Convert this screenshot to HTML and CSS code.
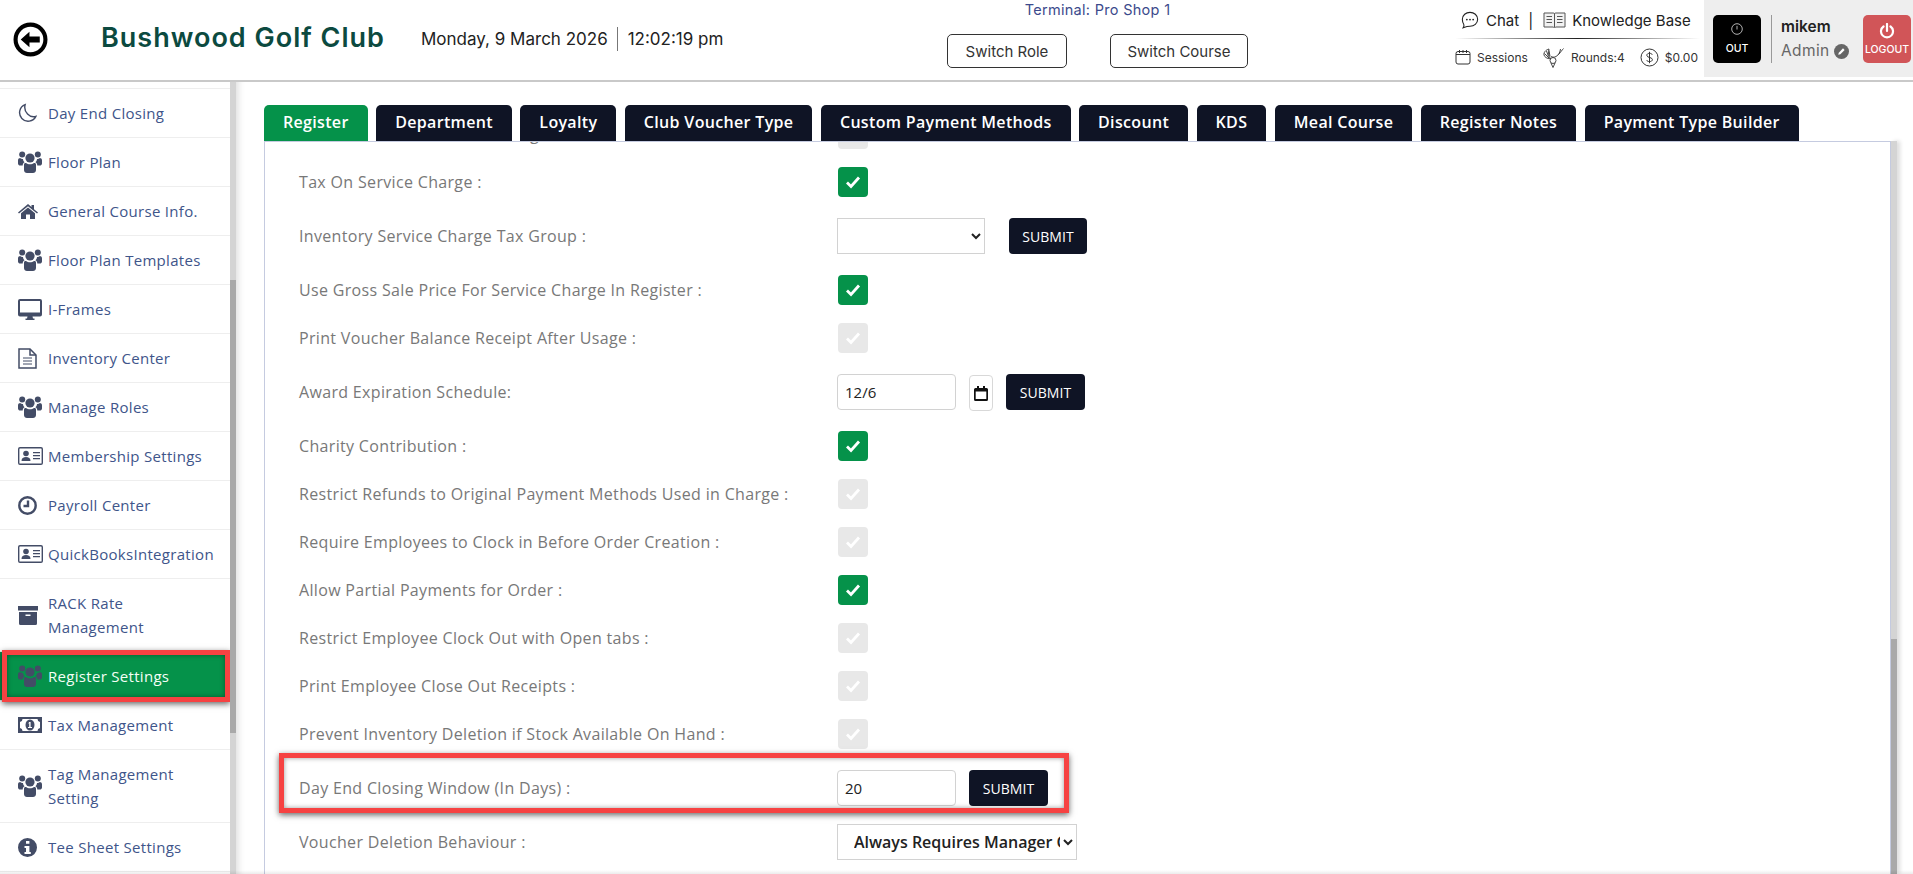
FILE: index.html
```html
<!DOCTYPE html>
<html lang="en">
<head>
<meta charset="utf-8">
<title>Register Settings</title>
<link rel="stylesheet" href="styles.css">
</head>
<body>
<svg class="sprite" width="0" height="0" aria-hidden="true">
  <symbol id="i-users" viewBox="0 0 24 22">
    <circle cx="12" cy="7" r="4.6"/><circle cx="4.2" cy="3.6" r="3"/><circle cx="19.8" cy="3.6" r="3"/>
    <path d="M6 13.5c0-1.2 1-1.6 2-1.6 1 .9 2.5 1.4 4 1.4s3-.5 4-1.4c1 0 2 .4 2 1.6V19c0 2-1.4 3-3 3H9c-1.600 0-3-1-3-3z"/>
    <path d="M0 9.500C0 7.700 1.200 7 2.200 7c.8.700 1.500 1 2.800 1 0 .9.500 2.400 1.600 3.300C5.400 11.800 4.700 13 4.700 14.600H2.400C1 14.600 0 13.800 0 12.500z"/>
    <path d="M24 9.500C24 7.700 22.800 7 21.800 7c-.8.700-1.500 1-2.800 1 0 .9-.5 2.400-1.600 3.300 1.200.5 1.900 1.700 1.900 3.300h2.300c1.400 0 2.400-.8 2.400-2.100z"/>
  </symbol>
  <symbol id="i-moon" viewBox="0 0 20 20">
    <path class="line" d="M7.500 1.200A9 9 0 1 0 18.800 13.500C12.500 15.500 5.500 9 7.500 1.200z"/>
  </symbol>
  <symbol id="i-home" viewBox="0 0 20 15">
    <path d="M10 0l3.500 3V1h2.500v4.200L20 8.500l-1 1.100L10 2.200 1 9.600 0 8.500z"/>
    <path d="M10 3.600l7 5.700V15h-5v-4.500H8V15H3V9.300z"/>
  </symbol>
  <symbol id="i-desktop" viewBox="0 0 24 21">
    <path d="M2 0h20a2 2 0 0 1 2 2v13.500a2 2 0 0 1-2 2h-7.500l.5 2h1.500V21h-9v-1.500H9l.5-2H2a2 2 0 0 1-2-2V2a2 2 0 0 1 2-2zm0 2v11.500h20V2z"/>
  </symbol>
  <symbol id="i-file" viewBox="0 0 19 21">
    <path class="line" d="M1 1h11l6 6v13H1z"/><path class="line" d="M12 1v6h6"/>
    <path class="line thin" d="M5 10h9M5 13h9M5 16h9"/>
  </symbol>
  <symbol id="i-card" viewBox="0 0 25 18">
    <path d="M2 0h21a2 2 0 0 1 2 2v14a2 2 0 0 1-2 2H2a2 2 0 0 1-2-2V2a2 2 0 0 1 2-2zm0 1.500a.6.6 0 0 0-.6.600V16c0 .4.200.6.600.6h21c.4 0 .6-.2.600-.6V2.100a.6.600 0 0 0-.6-.6z"/>
    <circle cx="8" cy="6.500" r="2.800"/><path d="M3.500 14c0-3 1.800-4 4.500-4s4.500 1 4.500 4z"/>
    <path d="M15 5h7v1.300h-7zM15 8h7v1.300h-7zM15 11h7v1.300h-7z"/>
  </symbol>
  <symbol id="i-clock" viewBox="0 0 19 19">
    <circle class="line thick" cx="9.500" cy="9.500" r="8.200"/><path class="line thick" d="M10 4.500v5.500H5.500"/>
  </symbol>
  <symbol id="i-archive" viewBox="0 0 20 19">
    <path d="M0 0h20v4.500H0zM1 6h18v11.500a1.500 1.500 0 0 1-1.500 1.500h-15A1.500 1.500 0 0 1 1 17.500zm6.500 2.500v1.500h5V8.500z"/>
  </symbol>
  <symbol id="i-money" viewBox="0 0 24 16">
    <path fill-rule="evenodd" d="M0 0h24v16H0zM4.500 2A3 3 0 0 1 2 5v6a3 3 0 0 1 2.500 3h15A3 3 0 0 1 22 11V5a3 3 0 0 1-2.500-3z"/>
    <ellipse cx="12" cy="8" rx="4.500" ry="5.500"/><path class="knock" d="M11 5h1.600v5H14v1h-4v-1h1.200V6.300L10.300 7z"/>
  </symbol>
  <symbol id="i-info" viewBox="0 0 19 19">
    <path fill-rule="evenodd" d="M9.500 0a9.500 9.500 0 1 1 0 19 9.500 9.500 0 0 1 0-19zM8 3v2.800h3.400V3zM6.500 8v2H8v4H6.500v2h6.300v-2h-1.400V8z"/>
  </symbol>
  <symbol id="i-check" viewBox="0 0 20 20">
    <path class="tick" d="M4 10.500l4 4 8-9"/>
  </symbol>
</svg>

<div class="app">
  <header class="topbar">
    <a class="back" href="#" aria-label="Back">
      <svg class="back-icon" viewBox="0 0 34 34"><circle cx="17" cy="17" r="14.500"/><path d="M7.500 17l8.500-7.500v4.500h10v6H16v4.500z"/></svg>
    </a>
    <h1 class="club">Bushwood Golf Club</h1>
    <div class="clock-text"><span class="date">Monday, 9 March 2026</span><span class="time">12:02:19 pm</span></div>
    <div class="terminal">
      <div class="terminal-name">Terminal: Pro Shop 1</div>
      <div class="terminal-actions">
        <button class="outline-btn role-btn">Switch Role</button>
        <button class="outline-btn course-btn">Switch Course</button>
      </div>
    </div>
    <div class="links">
      <div class="links-top">
        <svg class="ic-chat" viewBox="0 0 20 20"><path d="M10 1.500c4.500 0 8.500 3 8.500 7.800s-4 7.700-8.500 7.700c-1.500 0-4.500.5-7.500 1.500 1-1.500 1-2.500.6-3.500C2 13.500 1.500 11.500 1.500 9.300c0-4.800 4-7.800 8.500-7.800z"/><circle class="dot" cx="6.500" cy="9.500" r="1"/><circle class="dot" cx="10" cy="9.500" r="1"/><circle class="dot" cx="13.500" cy="9.500" r="1"/></svg>
        <span>Chat</span><span class="bar">|</span>
        <svg class="ic-book" viewBox="0 0 23 19"><path d="M1 2h9.500c.5 0 1 .4 1 1 0-.6.500-1 1-1H22v14h-9.500l-1 1-1-1H1zM11.500 3v13M3.500 5.500h5.500M3.500 8.500h5.500M3.500 11.500h5.500M14 5.500h5.500M14 8.500h5.500M14 11.500h5.500"/></svg>
        <span>Knowledge Base</span>
      </div>
      <div class="links-rule"></div>
      <div class="links-bottom">
        <svg class="ic-cal" viewBox="0 0 16 16"><rect x="1" y="2.500" width="14" height="12.500" rx="2"/><path d="M1 5.500h14M4.500 1v3M8 1v3M11.500 1v3"/></svg>
        <span class="stat stat-sessions">Sessions</span>
        <svg class="ic-golf" viewBox="0 0 21 21"><path d="M20.500 1.500c-1.500 1.500-3 4-5 6"/><path d="M17.500 2c-.3 2.500-1.500 6-4.500 7.500-2 1-3.500 .7-5 0"/><path d="M6 2C2.500 3 .5 5.500 1 8c.5 2 3 3.800 6.500 3.800C5.500 9 5 5.500 6 2zM3.500 4L5.500 9.500M1.500 6.500L6 11M6 3.500L7 9.500"/><circle cx="10" cy="13.500" r="3"/><path d="M8 16l2 4.500 2-4.500"/></svg>
        <span class="stat stat-rounds">Rounds:4</span>
        <svg class="ic-coin" viewBox="0 0 19 19"><circle cx="9.500" cy="9.500" r="8.500"/><path d="M12.300 6.800c-.4-1-1.500-1.500-2.800-1.500-1.500 0-2.700.8-2.700 2 0 2.800 5.600 1.600 5.600 4.300 0 1.200-1.200 2-2.900 2-1.400 0-2.500-.6-2.900-1.600M9.500 3.800v11.400"/></svg>
        <span class="stat">$0.00</span>
      </div>
    </div>
    <div class="user">
      <button class="tile tile-out">
        <svg class="tile-clock" viewBox="0 0 12 12"><circle cx="6" cy="6" r="5.300"/><path d="M6 2.800V6.500"/></svg>
        <span>OUT</span>
      </button>
      <div class="user-info">
        <div class="user-name">mikem</div>
        <div class="user-role">Admin <svg class="edit" viewBox="0 0 16 16"><circle cx="8" cy="8" r="8"/><path d="M4.500 11.500l.6-2.300 4.500-4.600 1.700 1.700-4.500 4.600z"/></svg></div>
      </div>
      <button class="tile tile-logout">
        <svg class="tile-power" viewBox="0 0 16 16"><path d="M4.500 3.500a6 6 0 1 0 7 0M8 1v7"/></svg>
        <span>LOGOUT</span>
      </button>
    </div>
  </header>

  <div class="body">
    <aside class="side">
      <nav class="menu">
        <a class="item"><span class="item-ic"><svg class="ic w19 h20"><use href="#i-moon"/></svg></span><span>Day End Closing</span></a>
        <a class="item"><span class="item-ic"><svg class="ic w24 h22"><use href="#i-users"/></svg></span><span>Floor Plan</span></a>
        <a class="item"><span class="item-ic"><svg class="ic w20 h15"><use href="#i-home"/></svg></span><span>General Course Info.</span></a>
        <a class="item"><span class="item-ic"><svg class="ic w24 h22"><use href="#i-users"/></svg></span><span>Floor Plan Templates</span></a>
        <a class="item"><span class="item-ic"><svg class="ic w24 h21"><use href="#i-desktop"/></svg></span><span>I-Frames</span></a>
        <a class="item"><span class="item-ic"><svg class="ic w19 h21"><use href="#i-file"/></svg></span><span>Inventory Center</span></a>
        <a class="item"><span class="item-ic"><svg class="ic w24 h22"><use href="#i-users"/></svg></span><span>Manage Roles</span></a>
        <a class="item"><span class="item-ic"><svg class="ic w25 h18"><use href="#i-card"/></svg></span><span>Membership Settings</span></a>
        <a class="item"><span class="item-ic"><svg class="ic w19 h19"><use href="#i-clock"/></svg></span><span>Payroll Center</span></a>
        <a class="item"><span class="item-ic"><svg class="ic w25 h18"><use href="#i-card"/></svg></span><span>QuickBooksIntegration</span></a>
        <a class="item"><span class="item-ic"><svg class="ic w20 h19"><use href="#i-archive"/></svg></span><span>RACK Rate<br>Management</span></a>
        <a class="item active"><span class="item-ic"><svg class="ic w24 h22"><use href="#i-users"/></svg></span><span>Register Settings</span><span class="mark mark-side"></span></a>
        <a class="item"><span class="item-ic"><svg class="ic w24 h16"><use href="#i-money"/></svg></span><span>Tax Management</span></a>
        <a class="item"><span class="item-ic"><svg class="ic w24 h22"><use href="#i-users"/></svg></span><span>Tag Management<br>Setting</span></a>
        <a class="item"><span class="item-ic"><svg class="ic w19 h19"><use href="#i-info"/></svg></span><span>Tee Sheet Settings</span></a>
      </nav>
      <div class="scroll scroll-side"><div class="thumb"></div></div>
    </aside>

    <main class="main">
      <div class="tabs">
        <a class="tab current">Register</a>
        <a class="tab">Department</a>
        <a class="tab">Loyalty</a>
        <a class="tab">Club Voucher Type</a>
        <a class="tab">Custom Payment Methods</a>
        <a class="tab">Discount</a>
        <a class="tab">KDS</a>
        <a class="tab">Meal Course</a>
        <a class="tab">Register Notes</a>
        <a class="tab">Payment Type Builder</a>
      </div>
      <div class="panel-wrap">
        <section class="panel">
          <div class="form">
            <div class="row"><label>Calculate Tax On Service Charge :</label><span class="box off"><svg class="tick-ic"><use href="#i-check"/></svg></span></div>
            <div class="row"><label>Tax On Service Charge :</label><span class="box"><svg class="tick-ic"><use href="#i-check"/></svg></span></div>
            <div class="row row-ctl"><label>Inventory Service Charge Tax Group :</label><div class="ctl ctl-wide"><select class="sel sel-empty"><option></option></select><button class="submit">SUBMIT</button></div></div>
            <div class="row"><label>Use Gross Sale Price For Service Charge In Register :</label><span class="box"><svg class="tick-ic"><use href="#i-check"/></svg></span></div>
            <div class="row"><label>Print Voucher Balance Receipt After Usage :</label><span class="box off"><svg class="tick-ic"><use href="#i-check"/></svg></span></div>
            <div class="row row-ctl"><label>Award Expiration Schedule:</label><div class="ctl"><input class="txt" value="12/6"><span class="cal"><svg viewBox="0 0 14 15"><path d="M1.500 2H3V0h2v2h4V0h2v2h1.500A1.500 1.500 0 0 1 14 3.500v10a1.500 1.500 0 0 1-1.500 1.500h-11A1.500 1.500 0 0 1 0 13.500v-10A1.500 1.500 0 0 1 1.500 2zm.2 3.500V13h10.600V5.500z"/></svg></span><button class="submit">SUBMIT</button></div></div>
            <div class="row"><label>Charity Contribution :</label><span class="box"><svg class="tick-ic"><use href="#i-check"/></svg></span></div>
            <div class="row"><label>Restrict Refunds to Original Payment Methods Used in Charge :</label><span class="box off"><svg class="tick-ic"><use href="#i-check"/></svg></span></div>
            <div class="row"><label>Require Employees to Clock in Before Order Creation :</label><span class="box off"><svg class="tick-ic"><use href="#i-check"/></svg></span></div>
            <div class="row"><label>Allow Partial Payments for Order :</label><span class="box"><svg class="tick-ic"><use href="#i-check"/></svg></span></div>
            <div class="row"><label>Restrict Employee Clock Out with Open tabs :</label><span class="box off"><svg class="tick-ic"><use href="#i-check"/></svg></span></div>
            <div class="row"><label>Print Employee Close Out Receipts :</label><span class="box off"><svg class="tick-ic"><use href="#i-check"/></svg></span></div>
            <div class="row"><label>Prevent Inventory Deletion if Stock Available On Hand :</label><span class="box off"><svg class="tick-ic"><use href="#i-check"/></svg></span></div>
            <div class="row row-ctl"><label>Day End Closing Window (In Days) :</label><div class="ctl"><input class="txt" value="20"><button class="submit">SUBMIT</button></div><span class="mark mark-form"></span></div>
            <div class="row row-ctl"><label>Voucher Deletion Behaviour :</label><div class="ctl"><select class="sel sel-voucher"><option>Always Requires Manager Override</option></select></div></div>
          </div>
        </section>
        <div class="scroll scroll-main"><div class="thumb"></div></div>
      </div>
    </main>
  </div>
  <div class="page-fade"></div>
</div>
</body>
</html>
```

FILE: styles.css
```css
* { box-sizing: border-box; }
html, body { margin: 0; height: 100%; overflow: hidden; background: #fff; }
body { font-family: "Open Sans", "Liberation Sans", sans-serif; }
.sprite { position: absolute; }

.app { position: relative; height: 874px; display: flex; flex-direction: column; overflow: hidden; }

/* Header */
.topbar { flex: 0 0 82px; display: flex; border-bottom: 2px solid #c9c9c9; font-family: Inter, "Open Sans", sans-serif; color: #222; }
.back { flex: 0 0 101px; padding: 22px 0 0 13px; }
.back-icon { display: block; width: 35px; height: 35px; }
.back-icon circle { fill: #fff; stroke: #000; stroke-width: 4; }
.back-icon path { fill: #000; }
.club { flex: 0 0 320px; margin: 0; padding-top: 19px; font-size: 27px; line-height: 38px; font-weight: 600; color: #0c4a40; letter-spacing: 1px; }
.clock-text { flex: 0 0 526px; display: flex; align-items: flex-start; padding-top: 27px; font-size: 17px; line-height: 24px; color: #222; }
.date { padding-right: 9px; border-right: 1px solid #777; }
.time { padding-left: 10px; }
.terminal { flex: 0 0 301px; display: flex; flex-direction: column; }
.terminal-name { margin-top: 1px; height: 33px; line-height: 18px; font-size: 14.500px; letter-spacing: .3px; text-align: center; color: #3c4a8c; }
.terminal-actions { display: flex; justify-content: space-between; }
.outline-btn { height: 34px; border: 1px solid #333; border-radius: 5px; background: #fff; font: 15px Inter, "Open Sans", sans-serif; color: #333; padding: 0; }
.role-btn { width: 120px; }
.course-btn { width: 138px; }

.links { flex: 0 0 256px; margin-left: auto; padding: 10px 4px 0 7px; }
.links-top { display: flex; align-items: center; height: 20px; padding-left: 6px; font-size: 15px; color: #222; }
.ic-chat { width: 18px; height: 20px; margin-right: 7px; fill: none; stroke: #222; stroke-width: 1.200; }
.ic-chat .dot { fill: #222; stroke: none; }
.bar { margin: 0 10px 0 9px; }
.ic-book { width: 23px; height: 19px; margin-right: 6px; fill: #f2f2f2; stroke: #555; stroke-width: 1; }
.links-rule { height: 1px; margin-top: 8px; background: linear-gradient(90deg, #fff, #222 50%, #fff); }
.links-bottom { display: flex; align-items: center; height: 20px; margin-top: 8px; font-size: 12px; color: #333; }
.ic-cal, .ic-golf, .ic-coin { fill: none; stroke: #333; stroke-width: 1; flex: none; }
.ic-golf { stroke-width: .9; }
.ic-cal { width: 16px; height: 16px; margin-right: 6px; }
.ic-golf { width: 21px; height: 21px; margin-right: 7px; }
.ic-coin { width: 19px; height: 19px; margin-right: 6px; }
.stat-sessions { margin-right: 15px; }
.stat-rounds { margin-right: 15px; }

.user { flex: 0 0 209px; height: 77px; background: #eee; display: flex; align-items: flex-start; padding: 15px 2px 0 9px; }
.tile { flex: 0 0 48px; height: 48px; border: 0; border-radius: 5px; padding: 0; display: flex; flex-direction: column; align-items: center; justify-content: center; color: #fff; font: 500 10.500px Inter, sans-serif; }
.tile-out { background: #000; }
.tile-clock { width: 12px; height: 12px; margin-bottom: 7px; fill: none; stroke: #ddd; stroke-width: .8; }
.tile-logout { background: #d15558; }
.tile-power { width: 16px; height: 16px; margin-bottom: 4px; fill: none; stroke: #fff; stroke-width: 2.200; stroke-linecap: round; }
.user-info { flex: 1; margin-left: 10px; padding-left: 9px; height: 48px; border-left: 1px solid #999; }
.user-name { font-size: 15.500px; font-weight: 600; line-height: 24px; color: #222; }
.user-role { display: flex; align-items: center; gap: 4px; font-size: 15.500px; letter-spacing: .4px; line-height: 24px; color: #666; }
.edit { width: 15px; height: 15px; fill: #666; }
.edit path { fill: #fff; }

/* Layout */
.body { flex: 1; min-height: 0; display: flex; }
.side { flex: 0 0 236px; display: flex; overflow: hidden; }
.menu { flex: 0 0 230px; padding-top: 6px; }
.menu::before { content: ""; display: block; height: 1px; background: #eee; }
.item { position: relative; display: flex; align-items: center; padding: 12px 0; border-bottom: 1px solid #eee; font-size: 15px; letter-spacing: .3px; line-height: 24px; color: #40558a; }
.item-ic { flex: 0 0 48px; padding-left: 18px; display: flex; align-items: center; }
.ic { fill: #434c66; stroke: none; }
.line { fill: none; stroke: #434c66; stroke-width: 1.500; }
.thin { stroke-width: 1; }
.thick { stroke-width: 2.400; }
.knock { fill: #fff; }
.w19 { width: 19px; } .w20 { width: 20px; } .w24 { width: 24px; } .w25 { width: 25px; }
.h15 { height: 15px; } .h16 { height: 16px; } .h18 { height: 18px; } .h19 { height: 19px; }
.h20 { height: 20px; } .h21 { height: 21px; } .h22 { height: 22px; }
.active { background: #05924a; color: #f4fff6; }

.mark { position: absolute; border: 5px solid #f64242; box-shadow: 0 2px 6px rgba(0,0,0,.6), inset 0 0 5px rgba(0,0,0,.4); pointer-events: none; }
.mark-side { top: -2px; bottom: -2px; left: 2px; right: 0; }
.mark-form { top: -17px; bottom: -7px; left: -20px; width: 790px; }

.scroll { position: relative; flex: 0 0 6px; background: #d4d4d4; }
.thumb { position: absolute; left: 0; right: 0; background: #a9a9a9; }
.scroll-side .thumb { top: 198px; height: 453px; }
.scroll-main .thumb { top: 498px; bottom: 0; }

/* Main */
.main { flex: 1; min-width: 0; display: flex; flex-direction: column; padding: 23px 16px 0 28px; box-shadow: inset 9px 0 7px -7px rgba(0,0,0,.14); }
.tabs { flex: 0 0 36px; display: flex; gap: 8.500px; }
.tab { padding: 0 19px; border-radius: 5px 5px 0 0; background: #0f1425; color: #fff; font-size: 16px; letter-spacing: .33px; font-weight: 600; line-height: 35px; }
.current { background: #05924a; }
.panel-wrap { flex: 1; min-height: 0; display: flex; }
.panel { flex: 1; min-width: 0; overflow: hidden; border: 1px solid #c5cbe0; border-bottom: 0; }
.scroll-main { box-shadow: 3px 0 4px rgba(0,0,0,.14); }
.form { margin-top: -23px; padding-left: 34px; }
.row { position: relative; display: flex; align-items: center; min-height: 30px; margin-bottom: 18px; }
.row label { flex: 0 0 538px; font-size: 16px; letter-spacing: .33px; line-height: 24px; color: #787878; }
.row-ctl { margin-top: 21px; margin-bottom: 0; }
.row-ctl + .row:not(.row-ctl) { margin-top: 21px; }
.row-ctl + .row-ctl { margin-top: 18px; }
.box { flex: 0 0 30px; height: 30px; margin-left: 1px; border-radius: 4px; background: #05924a; display: flex; align-items: center; justify-content: center; }
.box.off { background: #e8e8e8; }
.tick-ic { width: 20px; height: 20px; }
.tick { fill: none; stroke: #fff; stroke-width: 2.800; }
.ctl { display: flex; align-items: center; gap: 13px; }
.ctl-wide { gap: 24px; }
.ctl-wide .submit { width: 78px; }
.txt { width: 119px; height: 36px; padding: 0 7px; border: 1px solid #d2d2d2; border-radius: 4px; font: 15px "Open Sans", sans-serif; color: #222; background: #fff; }
.cal { width: 24px; height: 36px; margin: 1px 0 -1px; border: 1px solid #d8d8d8; border-radius: 4px; display: flex; align-items: center; justify-content: center; }
.cal svg { width: 14px; height: 15px; fill: #111; }
.submit { width: 79px; height: 36px; padding: 0; border: 0; border-radius: 4px; background: #0f1425; color: #fff; font: 500 14px "Open Sans", sans-serif; letter-spacing: .1px; }
.sel { height: 36px; border: 1px solid #d2d2d2; background: #fff; color: #222; font-family: "Open Sans", sans-serif; }
.sel-empty { width: 148px; }
.sel-voucher { width: 240px; padding-left: 12px; font-size: 16px; font-weight: 600; }
.page-fade { position: absolute; left: 0; right: 0; bottom: 0; height: 4px; background: linear-gradient(rgba(0,0,0,0), rgba(0,0,0,.08)); pointer-events: none; }
```
